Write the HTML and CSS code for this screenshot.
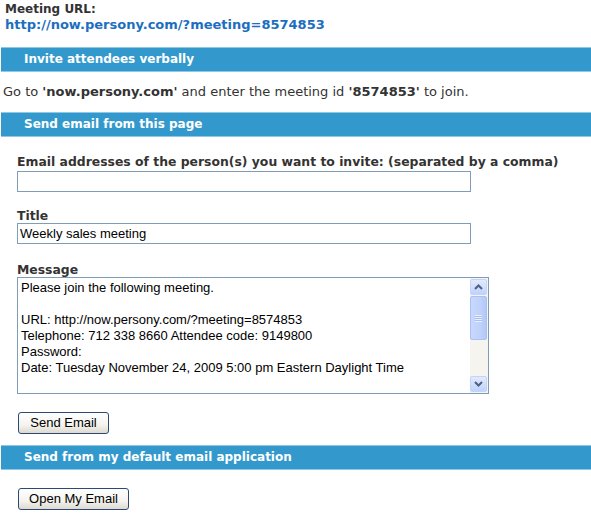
FILE: index.html
```html
<!DOCTYPE html>
<html>
<head>
<meta charset="utf-8">
<link rel="stylesheet" href="styles.css">
</head>
<body>
<div class="page">
  <div class="url-block">
    <div class="url-label">Meeting URL:</div>
    <a class="url-link" href="#">http://now.persony.com/?meeting=8574853</a>
  </div>

  <div class="bar bar-first">Invite attendees verbally</div>
  <p class="verbal">Go to <b>'now.persony.com'</b> and enter the meeting id <b>'8574853'</b> to join.</p>

  <div class="bar">Send email from this page</div>
  <div class="form">
    <div class="label label-email">Email addresses of the person(s) you want to invite: (separated by a comma)</div>
    <div class="input"></div>
    <div class="label label-title">Title</div>
    <div class="input">Weekly sales meeting</div>
    <div class="label label-msg">Message</div>
    <div class="textarea">
      <div class="ta-text">Please join the following meeting.<br><br>URL: http://now.persony.com/?meeting=8574853<br>Telephone: 712 338 8660 Attendee code: 9149800<br>Password:<br>Date: Tuesday November 24, 2009 5:00 pm Eastern Daylight Time</div>
      <div class="scrollbar">
        <div class="sb-btn">
          <svg width="9" height="6" viewBox="0 0 9 6"><path d="M1 5 L4.5 1.5 L8 5" fill="none" stroke="#4d6185" stroke-width="2"/></svg>
        </div>
        <div class="sb-thumb">
          <div class="grip"></div>
        </div>
        <div class="sb-track"></div>
        <div class="sb-btn">
          <svg width="9" height="6" viewBox="0 0 9 6"><path d="M1 1 L4.5 4.5 L8 1" fill="none" stroke="#4d6185" stroke-width="2"/></svg>
        </div>
      </div>
    </div>
    <div class="btn-row btn-send"><span class="btn btn-send-w">Send Email</span></div>
  </div>

  <div class="bar bar-third">Send from my default email application</div>
  <div class="form">
    <div class="btn-row btn-open"><span class="btn btn-open-w">Open My Email</span></div>
  </div>
</div>
</body>
</html>
```

FILE: styles.css
```css
html, body {
  margin: 0;
  padding: 0;
  background: #ffffff;
}
.page {
  padding: 2px 0 0 1px;
  font-family: "DejaVu Sans", Verdana, sans-serif;
  color: #333333;
}
.url-block {
  padding-left: 4px;
  line-height: 15px;
  font-weight: bold;
}
.url-label {
  color: #333333;
  font-size: 12px;
}
.url-link {
  color: #1c6fbf;
  font-size: 13px;
  text-decoration: none;
  display: block;
}
.bar {
  height: 23px;
  line-height: 23px;
  background: #3399cc;
  border-top: 1px solid #8fc7e6;
  border-bottom: 1px solid #8fc7e6;
  color: #ffffff;
  font-weight: bold;
  font-size: 12px;
  padding-left: 23px;
}
.bar-first {
  margin-top: 15px;
}
.verbal {
  margin: 0;
  height: 40px;
  line-height: 40px;
  font-size: 13px;
  padding-left: 2px;
}
.form {
  padding-left: 16px;
}
.label {
  font-size: 12.4px;
  font-weight: bold;
  line-height: 15px;
}
.label-email {
  margin-top: 17px;
  margin-bottom: 2px;
}
.label-title {
  margin-top: 16px;
}
.label-msg {
  margin-top: 18px;
}
.input {
  box-sizing: border-box;
  width: 454px;
  height: 21px;
  border: 1px solid #7f9db9;
  font-family: "Liberation Sans", Arial, sans-serif;
  font-size: 13px;
  line-height: 19px;
  padding-left: 2px;
  color: #000;
}
.textarea {
  box-sizing: border-box;
  width: 472px;
  height: 117px;
  border: 1px solid #7f9db9;
  display: flex;
  font-family: "Liberation Sans", Arial, sans-serif;
  font-size: 13px;
  color: #000;
}
.ta-text {
  flex: 1;
  padding: 2px 0 0 3px;
  line-height: 16px;
  overflow: hidden;
  white-space: nowrap;
}
.scrollbar {
  width: 17px;
  display: flex;
  flex-direction: column;
  background: #f5f4ee;
  padding: 1px 1px 1px 0;
}
.sb-btn {
  height: 16px;
  box-sizing: border-box;
  border: 1px solid #c3d3fd;
  border-radius: 2px;
  background: linear-gradient(to bottom, #e2eafe, #c0d2fc);
  display: flex;
  align-items: center;
  justify-content: center;
}
.sb-thumb {
  margin-top: 1px;
  height: 44px;
  box-sizing: border-box;
  border: 1px solid #a9c1f6;
  border-radius: 2px;
  background: linear-gradient(to right, #c8d8fd, #bfd1fc 60%, #b4c8f6);
  display: flex;
  align-items: center;
  justify-content: center;
}
.grip {
  width: 7px;
  height: 7px;
  background: repeating-linear-gradient(to bottom, #e9effd 0, #e9effd 1px, #a9bdee 1px, #a9bdee 2px);
}
.sb-track {
  flex: 1;
}
.btn-row {
  display: flex;
}
.btn-send {
  margin-top: 18px;
}
.btn-open {
  margin-top: 18px;
}
.btn {
  box-sizing: border-box;
  height: 22px;
  line-height: 20px;
  border: 1px solid #2c4a74;
  border-radius: 3px;
  background: linear-gradient(to bottom, #ffffff, #f4f3ee 60%, #dcdad0);
  font-family: "Liberation Sans", Arial, sans-serif;
  font-size: 13px;
  color: #000;
  text-align: center;
  margin-left: 1px;
}
.btn-send-w {
  width: 91px;
}
.btn-open-w {
  width: 111px;
}
.bar-third {
  margin-top: 11px;
}
```
